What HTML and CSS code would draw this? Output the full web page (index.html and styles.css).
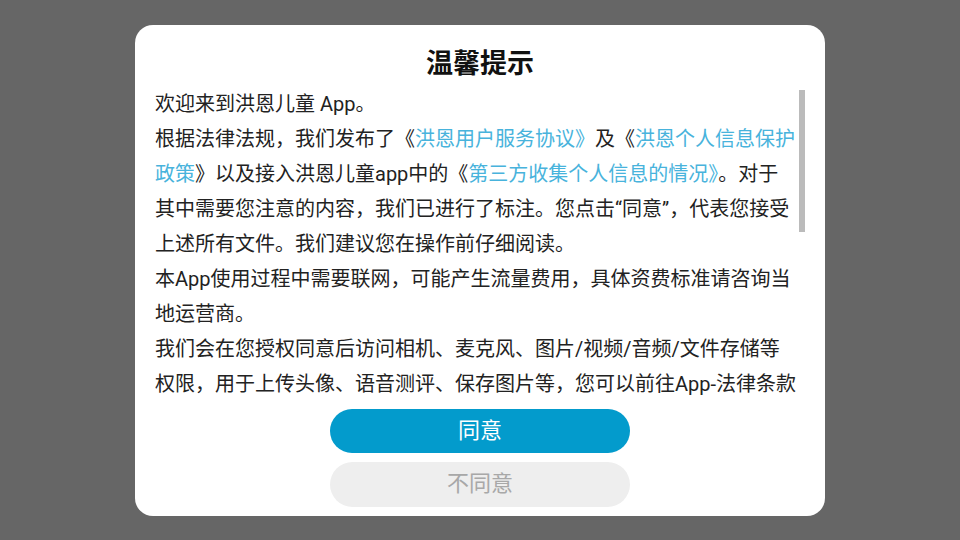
FILE: index.html
```html
<!DOCTYPE html>
<html lang="zh-CN">
<head>
<meta charset="utf-8">
<title>温馨提示</title>
<link rel="stylesheet" href="styles.css">
</head>
<body>
<div class="overlay">
  <div class="dialog">
    <h1 class="title">温馨提示</h1>
    <div class="scroll">
      <div class="content">
        <p>欢迎来到洪恩儿童 App。</p>
        <p>根据法律法规，我们发布了《<a class="link">洪恩用户服务协议》</a>及《<a class="link">洪恩个人信息保护<br>政策</a>》以及接入洪恩儿童app中的《<a class="link">第三方收集个人信息的情况》</a>。对于<br>其中需要您注意的内容，我们已进行了标注。您点击“同意”，代表您接受<br>上述所有文件。我们建议您在操作前仔细阅读。</p>
        <p>本App使用过程中需要联网，可能产生流量费用，具体资费标准请咨询当<br>地运营商。</p>
        <p>我们会在您授权同意后访问相机、麦克风、图片/视频/音频/文件存储等<br>权限，用于上传头像、语音测评、保存图片等，您可以前往App-法律条款<br>中查看详细的权限说明，您也可以在设备设置中随时关闭相关权限。<br>关闭后不会影响您使用App的其他基础功能。</p>
        <p>我们会采取业界领先的安全措施保护您的个人信息安全，未经您的同意，<br>我们不会向任何第三方提供您的个人信息。</p>
        <p>如您同意以上内容，请点击“同意”开始使用我们的产品和服务。如您不同<br>意，将无法使用本App。</p>
        <p>如您对以上协议有任何疑问，可通过App内的“联系我们”与我们取得联系。</p>
      </div>
      <div class="thumb"></div>
    </div>
    <div class="actions">
      <button class="btn btn-agree">同意</button>
      <button class="btn btn-disagree">不同意</button>
    </div>
  </div>
</div>
</body>
</html>
```
FILE: styles.css
```css
html, body {
  margin: 0;
  padding: 0;
}
body {
  width: 960px;
  height: 540px;
  background: #666666;
  font-family: Roboto, "Noto Sans CJK SC", sans-serif;
  overflow: hidden;
}
.overlay {
  width: 960px;
  height: 540px;
  display: flex;
  align-items: center;
  justify-content: center;
}
.dialog {
  width: 690px;
  box-sizing: border-box;
  background: #ffffff;
  border-radius: 18px;
  padding: 24px 20px 9px 20px;
  display: flex;
  flex-direction: column;
}
.title {
  margin: 0 0 8px 0;
  height: 30px;
  line-height: 30px;
  font-size: 27px;
  font-weight: 700;
  color: #111111;
  text-align: center;
}
.scroll {
  position: relative;
  width: 650px;
  height: 314px;
  overflow: hidden;
}
.content {
  width: 644px;
  font-size: 20px;
  line-height: 35px;
  color: #222222;
  white-space: nowrap;
}
.content p {
  margin: 0;
}
.link {
  color: #48b3dc;
  text-decoration: none;
}
.thumb {
  position: absolute;
  right: 0;
  top: 3px;
  width: 6px;
  height: 142px;
  background: #bbbbbb;
}
.actions {
  margin-top: 8px;
  display: flex;
  flex-direction: column;
  align-items: center;
  gap: 9px;
}
.btn {
  width: 300px;
  border: none;
  border-radius: 23px;
  font-family: Roboto, "Noto Sans CJK SC", sans-serif;
  font-size: 22px;
  line-height: 24px;
  padding: 0;
  display: flex;
  align-items: center;
  justify-content: center;
}
.btn-agree {
  height: 44px;
  background: #039bcc;
  color: #ffffff;
}
.btn-disagree {
  height: 45px;
  background: #eeeeee;
  color: #a8a8a8;
}
```
